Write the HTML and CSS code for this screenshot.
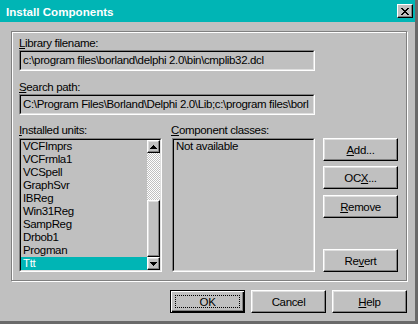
FILE: index.html
```html
<!DOCTYPE html>
<html>
<head>
<meta charset="utf-8">
<link rel="stylesheet" href="styles.css">
</head>
<body>
<div class="window">
  <div class="titlebar">
    <span class="title">Install Components</span>
    <div class="close"><svg width="8" height="7" viewBox="0 0 8 7"><path d="M0 0h2v1h-2zM6 0h2v1h-2zM1 1h2v1h-2zM5 1h2v1h-2zM2 2h4v1h-4zM3 3h2v1h-2zM2 4h4v1h-4zM1 5h2v1h-2zM5 5h2v1h-2zM0 6h2v1h-2zM6 6h2v1h-2z" fill="#000"/></svg></div>
  </div>
  <div class="content">
    <div class="group">
      <div class="lbl"><u>L</u>ibrary filename:</div>
      <div class="sunken edit"><div class="sunken-in">c:\program files\borland\delphi 2.0\bin\cmplib32.dcl</div></div>
      <div class="lbl lbl-search"><u>S</u>earch path:</div>
      <div class="sunken edit"><div class="sunken-in">C:\Program Files\Borland\Delphi 2.0\Lib;c:\program files\borl</div></div>
      <div class="lists">
        <div class="lbl"><u>I</u>nstalled units:</div>
        <div class="lbl"><u>C</u>omponent classes:</div>
        <div></div>
        <div class="sunken listbox"><div class="sunken-in list-in">
          <div class="items">
            <div class="item">VCFImprs</div>
            <div class="item">VCFrmla1</div>
            <div class="item">VCSpell</div>
            <div class="item">GraphSvr</div>
            <div class="item">IBReg</div>
            <div class="item">Win31Reg</div>
            <div class="item">SampReg</div>
            <div class="item">Drbob1</div>
            <div class="item">Progman</div>
            <div class="item selected">Ttt</div>
          </div>
          <div class="scrollbar">
            <div class="raised sbtn"><svg width="7" height="4" viewBox="0 0 7 4"><path d="M3 0h1v1h1v1h1v1h1v1h-7v-1h1v-1h1v-1h1z" fill="#000"/></svg></div>
            <div class="track"></div>
            <div class="raised thumb"></div>
            <div class="raised sbtn"><svg width="7" height="4" viewBox="0 0 7 4"><path d="M0 0h7v1h-1v1h-1v1h-1v1h-1v-1h-1v-1h-1v-1h-1z" fill="#000"/></svg></div>
          </div>
        </div></div>
        <div class="sunken listbox"><div class="sunken-in list-in">
          <div class="items"><div class="item">Not available</div></div>
        </div></div>
        <div class="btncol">
          <div class="raised btn"><span><u>A</u>dd...</span></div>
          <div class="raised btn btn-ocx"><span>OC<u>X</u>...</span></div>
          <div class="raised btn btn-remove"><span><u>R</u>emove</span></div>
          <div class="raised btn btn-revert"><span>Re<u>v</u>ert</span></div>
        </div>
      </div>
    </div>
    <div class="footer">
      <div class="btn default"><span>OK</span></div>
      <div class="raised btn"><span>Cancel</span></div>
      <div class="raised btn"><span><u>H</u>elp</span></div>
    </div>
  </div>
</div>
</body>
</html>
```
FILE: styles.css
```css
html, body {
  margin: 0;
  padding: 0;
  background: #c0c0c0;
}
body {
  font-family: "Liberation Sans", Arial, sans-serif;
  font-size: 11.5px;
  letter-spacing: -0.35px;
  color: #000;
}
.window {
  width: 418px;
  height: 324px;
  box-sizing: border-box;
  border-right: 3px solid #6a6a6a;
  border-bottom: 3px solid #6a6a6a;
  background: #c0c0c0;
  overflow: hidden;
}
.titlebar {
  height: 22px;
  background: #00b5b5;
  display: flex;
  align-items: center;
  justify-content: space-between;
  padding: 0 2px 0 6px;
}
.title {
  color: #fff;
  font-weight: bold;
  font-size: 11.6px;
  letter-spacing: 0;
}
.close {
  width: 16px;
  height: 14px;
  box-sizing: border-box;
  background: #c0c0c0;
  border: 1px solid;
  border-color: #fff #000 #000 #fff;
  box-shadow: inset -1px -1px #808080;
  display: flex;
  align-items: center;
  justify-content: center;
  padding-right: 1px;
}
.content {
  padding: 9px 8px 0 11px;
}
.group {
  height: 250px;
  box-sizing: border-box;
  border: 1px solid #808080;
  box-shadow: inset 1px 1px #fff, 1px 1px 0 #fff;
  padding: 4px 0 0 7px;
}
.lbl {
  height: 14px;
  line-height: 14px;
  white-space: nowrap;
}
.lbl-search {
  margin-top: 9px;
}
.sunken {
  box-sizing: border-box;
  border: 1px solid;
  border-color: #808080 #fff #fff #808080;
}
.sunken-in {
  height: 100%;
  box-sizing: border-box;
  border: 1px solid;
  border-color: #000 #dfdfdf #dfdfdf #000;
}
.edit {
  width: 296px;
  height: 21px;
}
.edit .sunken-in {
  padding-left: 2px;
  line-height: 17px;
  white-space: nowrap;
  overflow: hidden;
}
.lists {
  margin-top: 8px;
  display: grid;
  grid-template-columns: 143px 143px 75px;
  grid-template-rows: 15px 134px;
  column-gap: 10px;
}
.lists > .lbl:nth-child(2) {
  margin-left: -1px;
}
.listbox {
  height: 134px;
}
.list-in {
  display: flex;
}
.items {
  flex: 1;
}
.item {
  height: 13px;
  line-height: 13px;
  padding-left: 2px;
  white-space: nowrap;
}
.item.selected {
  background: #00b5b5;
  color: #fff;
}
.scrollbar {
  width: 13px;
  display: flex;
  flex-direction: column;
}
.raised {
  box-sizing: border-box;
  background: #c0c0c0;
  border: 1px solid;
  border-color: #fff #000 #000 #fff;
  box-shadow: inset -1px -1px #808080, inset 1px 1px #dfdfdf;
}
.sbtn {
  height: 13px;
  display: flex;
  align-items: center;
  justify-content: center;
}
.track {
  height: 47px;
  background: repeating-conic-gradient(#fff 0 25%, #c0c0c0 0 50%) 0 0 / 2px 2px;
}
.thumb {
  height: 57px;
}
.btncol {
  display: flex;
  flex-direction: column;
  margin-left: -2px;
}
.btn {
  width: 75px;
  height: 23px;
  display: flex;
  align-items: center;
  justify-content: center;
  position: relative;
}
.btn-ocx {
  margin-top: 5px;
}
.btn-remove {
  margin-top: 6px;
}
.btn-revert {
  margin-top: auto;
}
.footer {
  margin-top: 9px;
  display: flex;
  justify-content: flex-end;
  gap: 6px;
}
.default {
  box-sizing: border-box;
  background: #c0c0c0;
  border: 1px solid #000;
  box-shadow: inset 1px 1px #fff, inset -1px -1px #000, inset -2px -2px #808080;
}
.default::after {
  content: "";
  position: absolute;
  left: 4px;
  top: 4px;
  right: 4px;
  bottom: 4px;
  border: 1px dotted #000;
}
```
